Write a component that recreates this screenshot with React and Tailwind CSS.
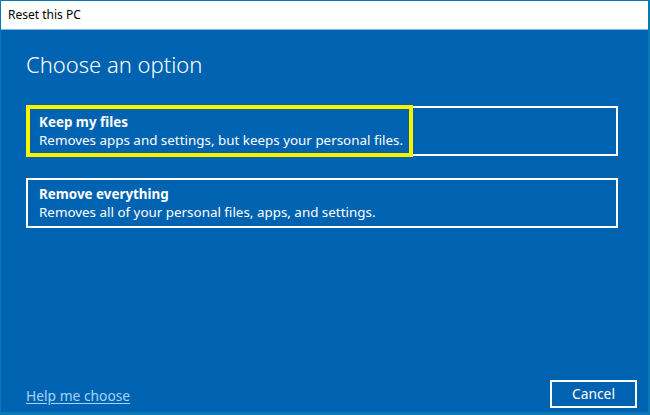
export default function App() {
  return (
    <div
      className="w-[650px] h-[415px] flex flex-col border-l border-t border-r-2 border-b-[3px] border-[#0a78b4] bg-[#0063b1] overflow-hidden"
      style={{ fontFamily: '"Noto Sans", "Open Sans", sans-serif' }}
    >
      {/* Title bar */}
      <div className="h-[29px] shrink-0 bg-white flex items-center pl-[7px] text-[12px] text-black border-b border-[#7fb4dc]">
        Reset this PC
      </div>

      {/* Body */}
      <div className="flex-1 flex flex-col pl-[25px] pr-[11px]">
        <h1 className="mt-[19px] text-[22px] font-light text-white leading-[30px]">
          Choose an option
        </h1>

        <div className="mt-[27px] flex flex-col gap-[22px] w-[592px]">
          <button className="relative h-[50px] border-2 border-white text-left pl-[11px] flex flex-col justify-center text-white">
            <div className="absolute -left-[2px] -top-[3px] w-[387px] h-[52px] border-4 border-[#f5f500]">
              <div className="w-full h-full border border-[#1d5a8f]"></div>
            </div>
            <span className="relative text-[13.4px] font-bold leading-[18px]">Keep my files</span>
            <span className="relative text-[13.4px] leading-[18px]">
              Removes apps and settings, but keeps your personal files.
            </span>
          </button>

          <button className="h-[50px] border-2 border-white text-left pl-[11px] flex flex-col justify-center text-white">
            <span className="text-[13.4px] font-bold leading-[18px]">Remove everything</span>
            <span className="text-[13.4px] leading-[18px]">
              Removes all of your personal files, apps, and settings.
            </span>
          </button>
        </div>

        <div className="mt-auto mb-[4px] flex items-end justify-between">
          <a href="#" className="text-[13.8px] text-[#a6d4f7] underline underline-offset-2 mb-[1px]">
            Help me choose
          </a>
          <button className="w-[87px] h-[28px] border-2 border-white text-white text-[13.8px] flex items-center justify-center">
            Cancel
          </button>
        </div>
      </div>
    </div>
  );
}
